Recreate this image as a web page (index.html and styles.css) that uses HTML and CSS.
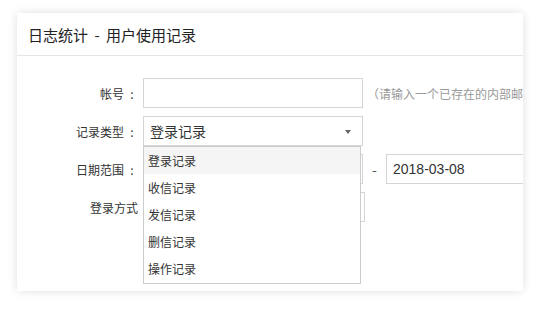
FILE: index.html
```html
<!DOCTYPE html>
<html lang="zh-CN">
<head>
  <meta charset="UTF-8" />
  <meta name="viewport" content="width=device-width, initial-scale=1.0" />
  <title>日志统计 - 用户使用记录</title>
  <link rel="stylesheet" href="styles.css">
</head>
<body>
  <div class="card">
    <div class="card-head">日志统计 <span class="sep">-</span> 用户使用记录</div>

    <div class="form">
      <div class="row">
        <label class="label">帐号<span class="colon">:</span></label>
        <input type="text" class="field" />
        <span class="hint">（请输入一个已存在的内部邮箱帐号）</span>
      </div>

      <div class="row">
        <label class="label">记录类型<span class="colon">:</span></label>
        <div class="select">
          <span>登录记录</span>
          <i class="arrow"></i>
          <ul class="options">
            <li class="active">登录记录</li>
            <li>收信记录</li>
            <li>发信记录</li>
            <li>删信记录</li>
            <li>操作记录</li>
          </ul>
        </div>
      </div>

      <div class="row">
        <label class="label">日期范围<span class="colon">:</span></label>
        <input type="text" class="field" />
        <span class="dash">-</span>
        <input type="text" class="field wide" value="2018-03-08" />
      </div>

      <div class="row">
        <label class="label plain">登录方式</label>
        <div class="select method"></div>
      </div>
    </div>
  </div>
</body>
</html>
```

FILE: styles.css
```css
body {
  margin: 0;
  padding: 13px 23px 20px 17px;
  background: #fff;
  font-family: "Noto Sans CJK SC", "Microsoft YaHei", sans-serif;
  color: #333;
}
.card {
  width: 506px;
  height: 278px;
  background: #fff;
  box-shadow: 0 0 9px rgba(0,0,0,0.13);
  overflow: hidden;
}
.card-head {
  height: 42px;
  line-height: 44px;
  padding-left: 11px;
  font-size: 15px;
  color: #222;
  border-bottom: 1px solid #e6e6e6;
  white-space: nowrap;
}
.sep {
  padding: 0 3px;
}
.form {
  padding-top: 22px;
}
.row {
  display: flex;
  align-items: center;
  height: 30px;
  margin-bottom: 8px;
  white-space: nowrap;
}
.label {
  width: 121px;
  margin-right: 5px;
  text-align: right;
  font-size: 12px;
  color: #333;
  flex: none;
}
.label.plain {
  width: 121px;
  margin-right: 5px;
}
.colon {
  display: inline-block;
  width: 12px;
  text-align: center;
  padding-left: 2px;
}
.field {
  box-sizing: border-box;
  width: 220px;
  height: 30px;
  border: 1px solid #d5d5d5;
  padding: 0 6px;
  font-family: "Liberation Sans", Arial, sans-serif;
  font-size: 14px;
  color: #333;
  outline: none;
  flex: none;
}
.field.wide {
  width: 200px;
}
.hint {
  flex: none;
  margin-left: 4px;
  font-size: 12px;
  color: #999;
}
.dash {
  flex: none;
  width: 23px;
  text-align: center;
  font-size: 14px;
  color: #555;
}
.select {
  position: relative;
  box-sizing: border-box;
  width: 220px;
  height: 30px;
  border: 1px solid #d5d5d5;
  padding-left: 6px;
  line-height: 28px;
  font-size: 14px;
  color: #333;
  flex: none;
}
.select.method {
  width: 222px;
}
.arrow {
  position: absolute;
  right: 11px;
  top: 13px;
  border-left: 3px solid transparent;
  border-right: 3px solid transparent;
  border-top: 4px solid #666;
}
.options {
  position: absolute;
  z-index: 2;
  left: -1px;
  top: 29px;
  width: 218px;
  box-sizing: border-box;
  margin: 0;
  padding: 0 0 1px;
  list-style: none;
  background: #fff;
  border: 1px solid #ccc;
}
.options li {
  height: 27px;
  line-height: 27px;
  padding-left: 4px;
  font-size: 12px;
  color: #333;
}
.options li.active {
  background: #f5f5f5;
}
```
